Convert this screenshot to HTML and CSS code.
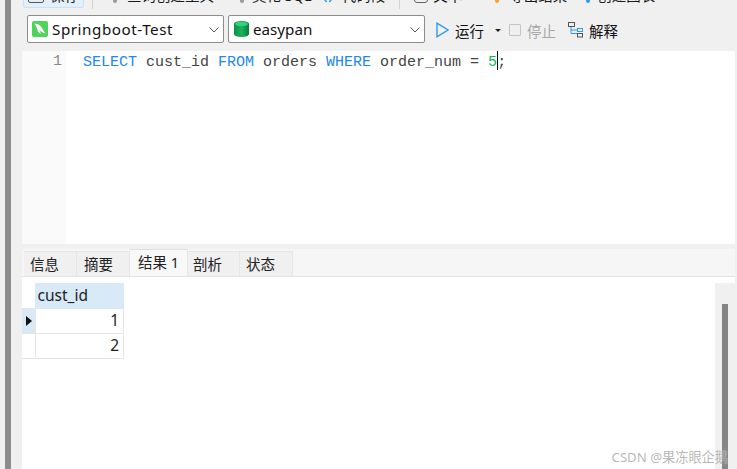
FILE: index.html
```html
<!DOCTYPE html>
<html lang="zh">
<head>
<meta charset="utf-8">
<title>Query</title>
<link rel="stylesheet" href="styles.css">
</head>
<body>
<div class="app">
  <div class="rail"><div class="rail-strip"></div></div>
  <div class="main">
    <div class="top-clip">
      <div class="top-row">
        <div class="save-btn"><span class="save-icon"></span><span>保存</span></div>
        <span class="sep sep-a"></span>
        <span class="top-item item-a"><i class="dot gray"></i>查询创建工具</span>
        <span class="top-item item-b"><i class="dot gray"></i>美化 SQL</span>
        <span class="top-item item-c"><svg class="code-ic" viewBox="0 0 12 12" width="12" height="12"><path d="M4.500 1 1 6l3.500 5M7.500 1 11 6l-3.500 5" fill="none" stroke="#2f9bef" stroke-width="1.500"/></svg>代码段</span>
        <span class="sep sep-b"></span>
        <span class="top-item item-d"><i class="box"></i>文本</span>
        <span class="top-item item-e"><i class="dot orange"></i>导出结果</span>
        <span class="top-item item-f"><i class="dot blue"></i>创建图表</span>
      </div>
    </div>
    <div class="conn-bar">
      <div class="select select-conn">
        <svg class="conn-icon" viewBox="0 0 16 16" width="16" height="16"><rect width="16" height="16" rx="2" fill="#4fd35c"/><path d="M2.500 2.500c3.500 .3 6 1.800 7.500 4.500 .8 1.500 1.800 3.500 3.500 5.500-2.500-.5-4-1.500-5-3-.5 1-.3 2 .3 3.500-2.300-1.200-3.500-3-3.700-5.500C4.300 5.500 3.500 4 2.500 2.500z" fill="#fff"/></svg>
        <span class="select-label label-conn">Springboot-Test</span>
        <svg class="chev" viewBox="0 0 10 6" width="10" height="6"><path d="M.5 .5 5 5 9.500 .5" fill="none" stroke="#555" stroke-width="1"/></svg>
      </div>
      <div class="select select-db">
        <svg class="db-icon" viewBox="0 0 15 16" width="15" height="16"><defs><linearGradient id="dbg" x1="0" x2="1" y1="0" y2="0"><stop offset="0" stop-color="#0c8f47"/><stop offset=".5" stop-color="#19b35f"/><stop offset="1" stop-color="#0a7d3c"/></linearGradient></defs><path d="M0 3c0-4 15-4 15 0v10c0 4-15 4-15 0z" fill="url(#dbg)"/><ellipse cx="7.500" cy="3" rx="6.500" ry="2.200" fill="#35cf7d"/></svg>
        <span class="select-label">easypan</span>
        <svg class="chev" viewBox="0 0 10 6" width="10" height="6"><path d="M.5 .5 5 5 9.500 .5" fill="none" stroke="#555" stroke-width="1"/></svg>
      </div>
      <div class="action run">
        <svg viewBox="0 0 13 16" width="13" height="16"><path d="M1 1.200 12 8 1 14.800z" fill="none" stroke="#2f9bef" stroke-width="1.400"/></svg>
        <span>运行</span>
        <span class="caret"></span>
      </div>
      <div class="action stop">
        <span class="stop-box"></span>
        <span>停止</span>
      </div>
      <div class="action explain">
        <svg viewBox="0 0 16 16" width="16" height="16"><g fill="none" stroke="#555" stroke-width="1"><rect x=".5" y=".5" width="6" height="4"/><rect x="9.500" y="6.500" width="5" height="3" stroke="#2f9bef"/><rect x="9.500" y="11.500" width="5" height="3.500"/></g><path d="M3 5v6.500h6M3 8h6" fill="none" stroke="#2f9bef"/></svg>
        <span>解释</span>
      </div>
    </div>
    <div class="editor">
      <div class="gutter">1</div>
      <div class="code"><span class="kw">SELECT</span> cust_id <span class="kw">FROM</span> orders <span class="kw">WHERE</span> order_num = <span class="num">5</span><span class="cursor"></span>;</div>
    </div>
    <div class="tabs">
      <span class="tab tab-1">信息</span>
      <span class="tab tab-2">摘要</span>
      <span class="tab tab-active">结果 1</span>
      <span class="tab tab-3">剖析</span>
      <span class="tab tab-4">状态</span>
    </div>
    <div class="results">
      <div class="grid-wrap">
        <table class="grid">
          <tr><th class="marker head-marker"></th><th class="col">cust_id</th></tr>
          <tr><td class="marker current"><span class="arrow"></span></td><td class="val">1</td></tr>
          <tr><td class="marker"></td><td class="val">2</td></tr>
        </table>
      </div>
      <div class="scrollbar"><div class="thumb"></div></div>
    </div>
  </div>
</div>
<div class="watermark">CSDN @果冻眼企鹅</div>
</body>
</html>
```
FILE: styles.css
```css
* { box-sizing: border-box; }
html, body { margin: 0; height: 100%; overflow: hidden; }
body {
  background: #f0f0f0;
  font-family: "Noto Sans", "Noto Sans CJK SC", sans-serif;
  color: #1a1a1a;
  position: relative;
}
.app { display: flex; height: 469px; }
.rail { width: 22px; flex: none; padding-left: 5px; }
.rail-strip { width: 6px; height: 100%; background: #8c8c8c; }
.main { flex: 1; min-width: 0; padding-right: 2px; display: flex; flex-direction: column; }

.top-clip { height: 13px; flex: none; }
.top-row { display: flex; align-items: flex-start; font-size: 14.500px; line-height: 20px; white-space: nowrap; }
.save-btn {
  width: 61px; height: 8px; margin-left: 1px; flex: none;
  background: #e3f0fb; border: 1px solid #c9e0f5; border-top: 0; border-radius: 0 0 3px 3px;
  display: flex; align-items: flex-end; gap: 6px; padding: 0 0 2px 4px;
}
.save-icon { width: 16px; height: 14px; border: 1px solid #555; border-radius: 2px; flex: none; margin-bottom: 2px; }
.sep { width: 1px; height: 9px; background: #d2d2d2; flex: none; }
.sep-a { margin-left: 8px; }
.sep-b { margin-left: 14px; }
.top-item { display: flex; align-items: flex-end; flex: none; height: 5px; }
.dot { width: 4px; height: 4px; border-radius: 50%; display: block; margin-bottom: 2px; }
.gray { background: #999; }
.blue { background: #2f9bef; }
.orange { background: #f5a623; }
.box { width: 14px; height: 14px; border: 1px solid #666; border-radius: 3px; margin-right: 5px; display: block; margin-bottom: 2px; }
.code-ic { margin-right: 8px; margin-bottom: 2px; flex: none; }
.item-a { margin-left: 20px; }
.item-a .dot { margin-right: 10px; }
.item-b { margin-left: 26px; }
.item-b .dot { margin-right: 8px; }
.item-c { margin-left: 10px; }
.item-d { margin-left: 14px; }
.item-e { margin-left: 33px; }
.item-e .dot { margin-right: 10px; }
.item-f { margin-left: 19px; }
.item-f .dot { margin-right: 7px; }

.conn-bar { height: 38px; flex: none; display: flex; align-items: center; padding: 0 0 6px 5px; font-size: 14.500px; }
.select {
  height: 28px; background: #fff; border: 1px solid #8c8c8c; border-radius: 2px;
  display: flex; align-items: center; flex: none; position: relative;
}
.select-conn { width: 197px; padding-left: 4px; }
.select-db { width: 197px; margin-left: 4px; padding-left: 5px; }
.select-label { font-size: 15.200px; margin-left: 4px; color: #111; }
.label-conn { letter-spacing: .55px; }
.chev { position: absolute; right: 4px; top: 11px; }
.action { display: flex; align-items: center; flex: none; margin-top: 2px; }
.run { margin-left: 11px; gap: 6px; color: #111; }
.caret { width: 0; height: 0; border: 3px solid transparent; border-top: 3px solid #222; border-bottom: 0; margin-left: 5px; margin-top: 1px; }
.stop { margin-left: 8px; gap: 6px; color: #a8a8a8; }
.stop-box { width: 12px; height: 12px; border: 1px solid #c4c4c4; border-radius: 1px; }
.explain { margin-left: 12px; gap: 5px; color: #111; }

.editor { height: 193px; flex: none; background: #fff; display: flex; }
.gutter {
  width: 44px; flex: none; background: #fafafa; color: #8a8a8a; text-align: right; padding-right: 4px;
  font: 15px/21px "Liberation Mono", monospace;
}
.code { flex: 1; padding-left: 17px; font: 15px/21px "Liberation Mono", monospace; color: #444; white-space: pre; }
.kw { color: #2188ee; }
.num { color: #10b85a; }
.cursor { display: inline-block; width: 1px; height: 19px; background: #111; vertical-align: -4px; margin-right: -1px; }

.tabs { height: 33px; flex: none; display: flex; align-items: flex-end; border-top: 5px solid #f0f0f0; border-bottom: 1px solid #e3e3e3; font-size: 14.500px; background: #f6f6f6; padding-left: 2px; }
.tab { height: 25px; background: #f0f0f0; border: 1px solid #e6e6e6; border-bottom: 0; border-left: 0; display: flex; align-items: center; padding-left: 6px; padding-bottom: 2px; color: #222; flex: none; }
.tab-1 { width: 53px; }
.tab-2 { width: 53px; padding-left: 7px; }
.tab-active { width: 58px; height: 27px; background: #f8f8f8; padding-left: 8px; padding-bottom: 3px; border-top-color: #e0e0e0; }
.tab-3 { width: 52px; padding-left: 5px; }
.tab-4 { width: 53px; padding-left: 6px; }

.results { flex: 1; background: #fff; display: flex; min-height: 0; }
.grid-wrap { flex: 1; padding-top: 6px; }
.grid { border-collapse: collapse; table-layout: fixed; width: 102px; font-size: 15.500px; line-height: 20px; }
.grid th, .grid td { padding: 0 0 2px; height: 25px; border: 1px solid #e6e6e6; }
.grid .marker { width: 13px; border-left: 0; padding: 0; }
.grid .head-marker { background: #fff; border: 0; }
.current { background: #d8e9f8; }
.grid .col { background: #d8e9f8; text-align: left; font-weight: 400; padding-left: 2px; color: #222; border-color: #d8e9f8; }
.grid .val { text-align: right; padding-right: 4px; color: #222; }
.arrow { display: block; width: 0; height: 0; border: 5px solid transparent; border-left: 6px solid #111; border-right: 0; margin-left: 4px; }
.scrollbar { width: 20px; flex: none; margin-top: 6px; background: #f0f0f0; padding: 21px 0 0 7px; }
.thumb { width: 6px; height: 100%; background: #868686; }

.watermark { position: absolute; right: 9px; bottom: 4px; font-size: 13.200px; line-height: 16px; color: rgba(120,120,120,.55); text-shadow: 0 0 1px rgba(255,255,255,.8); white-space: nowrap; }
```
